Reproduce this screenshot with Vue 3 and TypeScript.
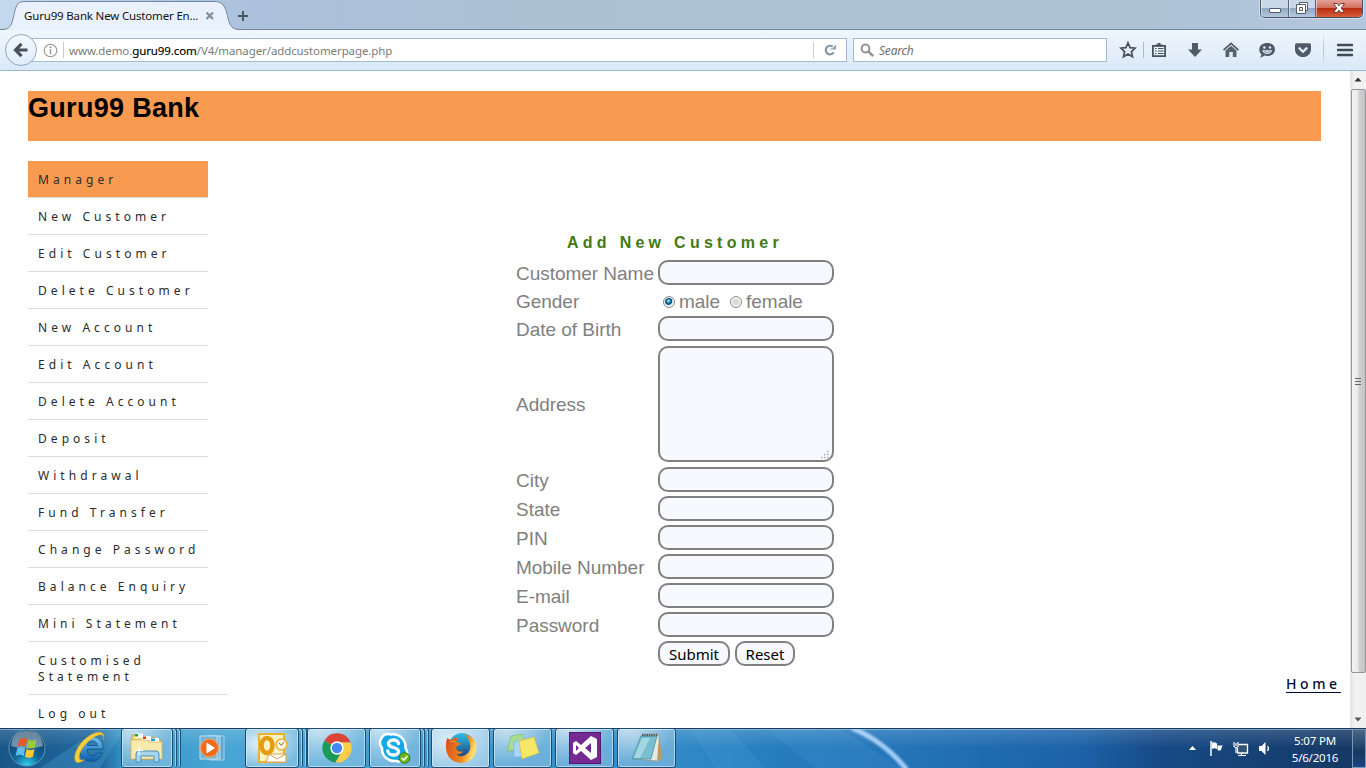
<script setup lang="ts">
interface MenuItem { label: string; kind?: string }
interface Field { label: string; kind: 'text' | 'gender' | 'area' }

const menu: MenuItem[] = [
  { label: 'Manager', kind: 'current' },
  { label: 'New Customer' },
  { label: 'Edit Customer' },
  { label: 'Delete Customer' },
  { label: 'New Account' },
  { label: 'Edit Account' },
  { label: 'Delete Account' },
  { label: 'Deposit' },
  { label: 'Withdrawal' },
  { label: 'Fund Transfer' },
  { label: 'Change Password' },
  { label: 'Balance Enquiry' },
  { label: 'Mini Statement' },
  { label: 'Customised Statement', kind: 'wrapped' },
  { label: 'Log out' },
]

const fields: Field[] = [
  { label: 'Customer Name', kind: 'text' },
  { label: 'Gender', kind: 'gender' },
  { label: 'Date of Birth', kind: 'text' },
  { label: 'Address', kind: 'area' },
  { label: 'City', kind: 'text' },
  { label: 'State', kind: 'text' },
  { label: 'PIN', kind: 'text' },
  { label: 'Mobile Number', kind: 'text' },
  { label: 'E-mail', kind: 'text' },
  { label: 'Password', kind: 'text' },
]
</script>

<template>
  <div class="screen">
    <header class="tabstrip">
      <div class="tab">
        <svg class="tab-shape" width="244" height="30" viewBox="0 0 244 30">
          <path d="M0 30V29.500H3C12 29.500 12.500 21 14.500 12C16.500 4 18.500 1.500 25 1.500H214C221 1.500 224 4 226.500 12C229 21 229 29.500 239 29.500H244V30Z" fill="#e9f2fc" />
          <path d="M0 29.500H3C12 29.500 12.500 21 14.500 12C16.500 4 18.500 1.500 25 1.500H214C221 1.500 224 4 226.500 12C229 21 229 29.500 239 29.500H244" fill="none" stroke="#7289a3" />
        </svg>
        <span class="tab-title">Guru99 Bank New Customer En...</span>
        <svg class="tab-close" width="10" height="10" viewBox="0 0 10 10"><path d="M1.500 1.500L8 8M8 1.500L1.500 8" stroke="#7e8d9d" stroke-width="2.200" /></svg>
      </div>
      <svg class="plus" width="12" height="12" viewBox="0 0 12 12"><path d="M6 1V11M1 6H11" stroke="#4d5864" stroke-width="2" /></svg>
      <div class="winbtns">
        <span class="wb wb-min"><svg width="14" height="8" viewBox="0 0 14 8"><rect x="1.500" y="2.500" width="11" height="4" rx=".5" fill="#fff" stroke="#555b6b" /></svg></span>
        <span class="wb wb-max"><svg width="14" height="14" viewBox="0 0 14 14"><path d="M4.500 1.500H12.500V9.500H4.500Z" fill="#fff" stroke="#555b6b" /><path d="M1.500 3.500H10.500V12.500H1.500ZM4.500 6.500V9.500H7.500V6.500Z" fill="#fff" fill-rule="evenodd" stroke="#555b6b" /></svg></span>
        <span class="wb wb-close"><svg width="14" height="12" viewBox="0 0 14 12"><path d="M1.500 1.500H5L7 3.800L9 1.500H12.500L9.200 6L12.500 10.500H9L7 8.200L5 10.500H1.500L4.800 6Z" fill="#fff" stroke="#6a3c40" /></svg></span>
      </div>
    </header>

    <div class="toolbar">
      <div class="back">
        <svg width="16" height="16" viewBox="0 0 16 16"><path d="M8.500 1.800L2.500 8L8.500 14.200M3 8H14.500" fill="none" stroke="#46525f" stroke-width="3.200" /></svg>
      </div>
      <div class="urlbar">
        <svg class="info" width="15" height="15" viewBox="0 0 15 15"><circle cx="7.500" cy="7.500" r="6.300" fill="none" stroke="#949494" stroke-width="1.100" /><path d="M7.500 6.200V11.200" stroke="#949494" stroke-width="1.400" /><circle cx="7.500" cy="4.200" r=".95" fill="#949494" /></svg>
        <span class="sep"></span>
        <span class="url">www.demo.<b>guru99.com</b>/V4/manager/addcustomerpage.php</span>
        <span class="sep sep-right"></span>
        <svg class="reload" width="14" height="14" viewBox="0 0 14 14"><path d="M10.700 9.400A4.300 4.300 0 1 1 9.800 3.700" fill="none" stroke="#8697a9" stroke-width="2.200" /><path d="M12.800 1.200V6.600H7.200V5.600H9.700Z" fill="#8697a9" /></svg>
      </div>
      <div class="search">
        <svg width="15" height="15" viewBox="0 0 15 15"><circle cx="5.500" cy="5.500" r="3.900" fill="none" stroke="#929292" stroke-width="2" /><path d="M8.300 8.300L13.200 13.200" stroke="#929292" stroke-width="2.600" /></svg>
        <span>Search</span>
      </div>
      <div class="tools">
        <svg width="18" height="18" viewBox="0 0 18 18"><path d="M9 1.800L11.100 6.600L16.200 7.100L12.400 10.600L13.500 15.800L9 13.100L4.500 15.800L5.600 10.600L1.800 7.100L6.900 6.600Z" fill="none" stroke="#47535f" stroke-width="1.700" /></svg>
        <span class="tool-sep"></span>
        <svg width="16" height="16" viewBox="0 0 16 16"><path d="M1.900 3.900H14.100V14.100H1.900Z" fill="none" stroke="#47535f" stroke-width="1.800" /><path d="M4.500 4.500V2.500H6.500V1H9.500V2.500H11.500V4.500Z" fill="#47535f" /><path d="M4 6.500H5.500M7 6.500H12.500M4 9H5.500M7 9H12.500M4 11.500H5.500M7 11.500H12.500" stroke="#47535f" stroke-width="1.200" /></svg>
        <svg width="16" height="16" viewBox="0 0 16 16"><path d="M5 1H11V7.500H15L8 15L1 7.500H5Z" fill="#4f5c68" /></svg>
        <svg width="18" height="16" viewBox="0 0 18 16"><path d="M1.500 8.200L9 1.400L16.500 8.200" fill="none" stroke="#4f5c68" stroke-width="1.700" /><path d="M3.500 8.500L9 3.800L14.500 8.500V15H10.800V10H7.200V15H3.500Z" fill="#56636f" /></svg>
        <svg width="18" height="17" viewBox="0 0 18 17"><path d="M9.200 1C13.800 1 17 3.600 17 7.400C17 11.200 13.800 14 9.200 14C8 14 7 13.900 6.200 13.600C5 15 3.500 15.500 2 15.300C3 14.400 3.400 13.300 3.300 12.200C2 11 1.300 9.400 1.300 7.400C1.300 3.600 4.600 1 9.200 1Z" fill="#4f5c68" /><circle cx="6.300" cy="5.500" r="1.200" fill="#e3eefa" /><circle cx="12" cy="5.500" r="1.200" fill="#e3eefa" /><path d="M4.300 8.200H14C13.500 10.800 11.600 12 9.200 12S4.900 10.800 4.300 8.200Z" fill="#e3eefa" /><path d="M6 9.500Q9.200 11.500 12.300 9.500" fill="none" stroke="#4f5c68" stroke-width=".7" /></svg>
        <svg width="18" height="16" viewBox="0 0 18 16"><path d="M2.500 1.300H15.500Q17 1.300 17 3V7.200C17 11.700 13.600 15 9 15S1 11.700 1 7.200V3Q1 1.300 2.500 1.300Z" fill="#4f5c68" /><path d="M4.800 5.600L9 9.700L13.200 5.600" fill="none" stroke="#e3eefa" stroke-width="2.200" /></svg>
        <span class="tool-sep tall"></span>
        <svg width="16" height="14" viewBox="0 0 16 14"><path d="M1 2H15M1 7H15M1 12H15" stroke="#404c58" stroke-width="2.700" stroke-linecap="round" /></svg>
      </div>
    </div>

    <div class="viewport">
      <main class="page">
        <h1 class="banner">Guru99 Bank</h1>
        <div class="columns">
          <ul class="menu">
            <li v-for="m in menu" :key="m.label" :class="m.kind"><span>{{ m.label }}</span></li>
          </ul>
          <form class="form" @submit.prevent>
            <h2>Add New Customer</h2>
            <div v-for="f in fields" :key="f.label" class="row" :class="f.kind">
              <label>{{ f.label }}</label>
              <div v-if="f.kind === 'gender'" class="choices">
                <i class="radio on"></i><span>male</span>
                <i class="radio second"></i><span>female</span>
              </div>
              <div v-else-if="f.kind === 'area'" class="box">
                <svg class="grip" width="10" height="10" viewBox="0 0 10 10"><path d="M7 1.500H8.500M4 4.500H5.500M7 4.500H8.500M1 7.500H2.500M4 7.500H5.500M7 7.500H8.500" stroke="#a9a9a9" stroke-width="1.300" /></svg>
              </div>
              <div v-else class="box"></div>
            </div>
            <div class="buttons"><button class="submit">Submit</button><button class="reset">Reset</button></div>
          </form>
          <a class="home">Home</a>
        </div>
      </main>
      <div class="scroll">
        <svg class="up" width="8" height="5" viewBox="0 0 8 5"><path d="M4 .5L7.500 4.500H.5Z" fill="#333" /></svg>
        <div class="thumb"><svg width="8" height="9" viewBox="0 0 8 9"><path d="M1 1.500H7M1 4.500H7M1 7.500H7" stroke="#666" /></svg></div>
        <svg class="down" width="8" height="5" viewBox="0 0 8 5"><path d="M4 4.500L7.500 .5H.5Z" fill="#555" /></svg>
      </div>
    </div>

    <footer class="taskbar">
      <svg class="aurora" width="1366" height="40" viewBox="0 0 1366 40">
        <defs>
          <linearGradient id="bar"><stop offset="0" stop-color="#1a5789" /><stop offset=".075" stop-color="#20689f" /><stop offset=".09" stop-color="#3593c5" /><stop offset=".16" stop-color="#48a5d4" /><stop offset=".33" stop-color="#3d97cc" /><stop offset=".5" stop-color="#3089c5" /><stop offset=".58" stop-color="#257bbd" /><stop offset=".66" stop-color="#2474b8" /><stop offset=".79" stop-color="#1c62a8" /><stop offset=".85" stop-color="#174a85" /><stop offset="1" stop-color="#153763" /></linearGradient>
          <linearGradient id="shine" x2="0" y2="1"><stop offset="0" stop-color="#fff" stop-opacity=".16" /><stop offset=".5" stop-color="#fff" stop-opacity="0" /></linearGradient>
          <filter id="soft" x="-20%" y="-20%" width="140%" height="140%"><feGaussianBlur stdDeviation="1.300" /></filter>
        </defs>
        <rect width="1366" height="40" fill="url(#bar)" />
        <path d="M40 40L100 0H125L100 40Z" fill="#57b2df" opacity=".25" />
        <path d="M690 0H730L765 40H715ZM765 0H840L900 40H815Z" fill="#60aee8" opacity=".13" />
        <path d="M852 0Q885 14 907 42" fill="none" stroke="#a1cdf7" stroke-width="5" filter="url(#soft)" />
        <rect width="1366" height="40" fill="url(#shine)" />
        <path d="M0 .5H1366" stroke="#1d3a5c" /><path d="M0 1.500H1366" stroke="#9ecbea" stroke-opacity=".65" />
      </svg>

      <div class="slot orb">
        <svg width="40" height="40" viewBox="0 0 40 40">
          <defs><radialGradient id="orbg" cx=".5" cy="1" r=".9"><stop offset="0" stop-color="#35d9f5" /><stop offset=".4" stop-color="#126a9f" /><stop offset="1" stop-color="#12395c" /></radialGradient></defs>
          <circle cx="20" cy="20" r="18" fill="url(#orbg)" stroke="#5a97b8" />
          <path d="M4 18Q5 3 20 3T36 18Q20 23 4 18Z" fill="#c7d7e3" opacity=".5" />
          <path d="M12.500 11.500Q16 8.500 20 11L18.500 19Q14.500 16.500 10.500 19Z" fill="#e7572b" />
          <path d="M21.300 11.700Q25 14 29.500 11.500L27.800 19.500Q23.500 21.600 19.700 19.500Z" fill="#9ecb3a" />
          <path d="M10.300 20.300Q14 18 18.200 20.300L16.800 28Q12.500 25.500 8.700 28Z" fill="#5fbdf0" />
          <path d="M19.500 20.900Q23.500 23.200 27.500 20.900L26 28.500Q22 31 18 28.500Z" fill="#fbc930" />
        </svg>
      </div>

      <div class="slot ie">
        <svg width="34" height="36" viewBox="0 0 34 36">
          <defs><linearGradient id="ieg" x2="0" y2="1"><stop offset="0" stop-color="#6fc7f3" /><stop offset="1" stop-color="#0d5aa7" /></linearGradient></defs>
          <path d="M31 19H15C15 26.500 22.500 27.500 25 23H30.500C28 29 24 31.500 19.500 31.500C12 31.500 7.500 26 7.500 19S12 6.500 19.500 6.500S32 12 31 19ZM15.300 15.500H25.300C25 9.500 15.700 9.500 15.300 15.500Z" fill="url(#ieg)" stroke="#104f89" stroke-width=".8" />
          <path d="M31 10C36-2 19 1 9 13C2 22 1 31 5 32.500C7 33.200 10 31.500 13 29.500C5 33 6 24 12 16C19 7 34-1 31 10Z" fill="#f7cd3b" stroke="#cf9714" stroke-width=".5" />
        </svg>
      </div>

      <div class="slot btn explorer">
        <svg width="34" height="32" viewBox="0 0 34 32">
          <path d="M2 3H10L12 5H24L25 8H31V27H2Z" fill="#f2d677" stroke="#c09a3c" stroke-width=".8" />
          <path d="M5 1.500H13V6H5Z" fill="#fff" /><path d="M5 2H8V4.500H5Z" fill="#17a84a" /><path d="M12 4H21V8H12Z" fill="#fff" /><path d="M13 4.500H16V7H13Z" fill="#d7362b" /><path d="M20 6H29V10H20Z" fill="#fff" /><path d="M21 6.500H25V9H21Z" fill="#1e9ae0" />
          <path d="M1 8H17L19 10H32V27H1Z" fill="#f8e9ac" stroke="#d5b661" stroke-width=".8" />
          <path d="M6 30V22Q6 19 9 19H26Q29 19 29 22V30H24V24H11V30Z" fill="#a4d5ec" stroke="#4c91bd" />
          <path d="M9 14V23M5 18.500H13" stroke="#fff" stroke-width="1.200" />
        </svg>
      </div>
      <i class="stack"></i><i class="stack second"></i>

      <div class="slot wmp">
        <svg width="30" height="28" viewBox="0 0 30 28">
          <path d="M12 2H26V26H12Z" fill="#60a6d0" stroke="#a2d3eb" /><path d="M8 2H22V25H8Z" fill="#7ebadb" stroke="#b9e0f1" /><path d="M2 2H19V25H2Z" fill="#72b3d8" stroke="#b5deef" />
          <circle cx="11.500" cy="14" r="9" fill="#ed6b1c" stroke="#ffa55b" /><path d="M8.500 8.500L17 14L8.500 19.500Z" fill="#fff" />
        </svg>
      </div>

      <div class="slot btn outlook">
        <svg width="34" height="34" viewBox="0 0 34 34">
          <path d="M4 3H29V31H4Z" fill="#fff3c6" stroke="#eeb12d" stroke-width="2" /><ellipse cx="12" cy="14.500" rx="5.500" ry="7.500" fill="none" stroke="#e59c0c" stroke-width="4.500" />
          <path d="M14 23H31V31H11Z" fill="#fff" stroke="#dba047" /><path d="M14 23L22 28L31 23" fill="none" stroke="#dba047" />
          <circle cx="26.500" cy="13.500" r="5.500" fill="#fff8dd" stroke="#e8b03a" stroke-width="1.500" /><path d="M24 12L26.500 14.500L29 11" fill="none" stroke="#a06b1c" />
        </svg>
      </div>
      <i class="stack"></i><i class="stack second"></i>

      <div class="slot btn chrome">
        <svg width="32" height="32" viewBox="0 0 32 32">
          <path d="M16 16L3.300 8.700A14.500 14.500 0 0 1 29.500 10.500H16Z" fill="#dc4437" />
          <path d="M16 16L3.300 8.700A14.500 14.500 0 0 0 14.500 30.500L21.500 19Z" fill="#1a9c58" />
          <path d="M16 10.500H29.500A14.500 14.500 0 0 1 14.500 30.500L21 19Z" fill="#fdcc4a" />
          <circle cx="16" cy="16" r="6.700" fill="#fff" /><circle cx="16" cy="16" r="5.200" fill="#4387f5" />
        </svg>
      </div>

      <div class="slot btn skype">
        <svg width="34" height="34" viewBox="0 0 34 34">
          <path d="M4 17A8.500 8.500 0 0 1 13 3.500A12.500 12.500 0 0 1 27.500 17A8.500 8.500 0 0 1 18 30A12.500 12.500 0 0 1 4 17Z" fill="#12a9e8" stroke="#fff" stroke-width="2.500" />
          <path d="M20.500 12.500C20 7.500 10 8 10.500 13C11 17.500 20.500 15.500 20.500 20.500C20.500 25.500 10 25 9.800 20" fill="none" stroke="#fff" stroke-width="3.300" stroke-linecap="round" />
          <circle cx="26.500" cy="27" r="5.300" fill="#6bb51d" stroke="#397a0e" /><path d="M23.700 27L25.800 29.100L29.500 25" fill="none" stroke="#fff" stroke-width="1.500" />
        </svg>
      </div>
      <i class="stack"></i><i class="stack second"></i>

      <div class="slot btn firefox">
        <svg width="34" height="34" viewBox="0 0 34 34">
          <defs><linearGradient id="ff" x2="1" y2=".3"><stop offset="0" stop-color="#d64b1b" /><stop offset=".7" stop-color="#ee861f" /><stop offset="1" stop-color="#ffe16b" /></linearGradient><linearGradient id="globe" x2="0" y2="1"><stop offset="0" stop-color="#32bfea" /><stop offset="1" stop-color="#173b79" /></linearGradient></defs>
          <circle cx="18" cy="15" r="13" fill="url(#globe)" />
          <path d="M3 7L7 9Q10 6 14 7L12 11Q17 11 17 13L12 16Q13 22 19 20Q17 24 12 23Q18 28 24 22Q29 16 24 7Q23 5 20 3Q35 6 32 20C30 28 24 32 17 32C6 32-1 22 3 7Z" fill="url(#ff)" />
          <path d="M6 11L9 10L13 12" fill="none" stroke="#f3a143" />
        </svg>
      </div>

      <div class="slot btn notes">
        <svg width="36" height="30" viewBox="0 0 36 30">
          <path d="M6 3L18 1L20 16L2 18Z" fill="#a9dc91" stroke="#77b966" stroke-width=".6" /><path d="M9 8H23V24H9Z" fill="#a6d8f5" stroke="#71b4df" stroke-width=".6" /><path d="M14 8L29 4L34 20L17 26Z" fill="#f6e768" stroke="#cdbb3d" stroke-width=".6" />
        </svg>
      </div>

      <div class="slot btn studio">
        <svg width="32" height="32" viewBox="0 0 32 32">
          <rect width="32" height="32" fill="#742a92" /><rect x=".5" y=".5" width="31" height="31" fill="none" stroke="#531870" />
          <path d="M22 4L28 7V25L22 28L12 19L7 23L4 21V11L7 9L12 13ZM22 11L16 16L22 21ZM7 13V19L10 16Z" fill="#fff" fill-rule="evenodd" />
        </svg>
      </div>

      <div class="slot btn notepad">
        <svg width="34" height="32" viewBox="0 0 34 32">
          <path d="M12 3H29L31 27L27 29L4 27Z" fill="#e8e8df" stroke="#918b77" stroke-width=".7" /><path d="M29 4L32 27L27 29Z" fill="#b99b63" />
          <path d="M11 4H27L21 27H2Z" fill="#78bfd1" stroke="#3d899e" stroke-width=".7" /><path d="M12 6H20L10 26H4Z" fill="#c1e6ec" opacity=".6" /><path d="M12 3H28" stroke="#4e5558" stroke-width="2.500" stroke-dasharray="1.300 1" />
        </svg>
      </div>

      <div class="tray">
        <svg class="chevron" width="9" height="6" viewBox="0 0 9 6"><path d="M4.500 1L8 5H1Z" fill="#fff" /></svg>
        <svg class="flag" width="15" height="17" viewBox="0 0 15 17"><path d="M2 1V16" stroke="#fff" stroke-width="1.500" /><path d="M3 2.500Q5.500 1.500 8 3.500V9Q5.500 7.500 3 9ZM8.500 5Q11 6.500 13.500 5L12 10Q10 11 8.500 10Z" fill="#fff" /></svg>
        <svg class="network" width="16" height="16" viewBox="0 0 16 16"><path d="M5.500 3.500H14.500V12H4.500V7" fill="#315474" stroke="#fff" stroke-width="1.300" /><path d="M1 1V5Q1 6.500 3 6.500T5 5V1M3 2V5M3 6.500V12M8.500 12V14.500M5 14.500H13" fill="none" stroke="#fff" stroke-width="1.200" /></svg>
        <svg class="volume" width="14" height="15" viewBox="0 0 14 15"><path d="M1 5H3.500L7.500 1V14L3.500 10H1Z" fill="#fff" /><path d="M9.500 5Q11.500 7.500 9.500 10" fill="none" stroke="#fff" stroke-width="1.200" /></svg>
        <div class="clock"><span>5:07 PM</span><span>5/6/2016</span></div>
        <i class="peek"></i>
      </div>
    </footer>
  </div>
</template>

<style>
html, body { margin: 0; overflow: hidden; background: #fff; }
</style>

<style scoped>
* { box-sizing: border-box; }
svg { display: block; flex: none; }
.screen { width: 1366px; height: 768px; display: flex; flex-direction: column; overflow: hidden; background: #fff; font-family: "Noto Sans", sans-serif; }

.tabstrip { height: 30px; flex: none; display: flex; align-items: flex-start; background: linear-gradient(90deg, #c4d9ee 0, #abc0da 260px, #acc0d4 520px, #aec2d6 1150px, #b3c8df 1366px); box-shadow: inset 0 -1px #7289a3; }
.tab { position: relative; width: 237px; height: 30px; display: flex; align-items: center; padding-left: 24px; }
.tab-shape { position: absolute; left: 0; top: 0; }
.tab-title { position: relative; width: 180px; font-size: 11.5px; letter-spacing: -.17px; white-space: nowrap; color: #111; line-height: 16px; padding-top: 2px; }
.tab-close { position: relative; margin-left: 1px; margin-top: 2px; }
.plus { margin-top: 10px; }
.winbtns { margin-left: auto; margin-right: 3px; height: 18px; width: 103px; display: flex; border: 1px solid #45536a; border-top: 0; border-radius: 0 0 5px 5px; overflow: hidden; box-shadow: 0 0 1px 1px rgba(255,255,255,.45); }
.wb { display: flex; align-items: center; justify-content: center; background: linear-gradient(#cad7e7 0 45%, #92a8c3 50%, #b5c8dc); border-right: 1px solid #56667d; box-shadow: inset 1px 0 rgba(255,255,255,.5); }
.wb-min { width: 28px; padding-top: 2px; }
.wb-max { width: 27px; padding-bottom: 1px; }
.wb-close { flex: 1; border-right: 0; background: linear-gradient(#e5a196 0, #d3705d 45%, #b92c12 50%, #d75d38); padding-bottom: 1px; }

.toolbar { height: 41px; flex: none; display: flex; align-items: center; background: linear-gradient(#eff6fd, #dae9f8); border-bottom: 1px solid #a2b7ce; padding-left: 5px; }
.back { position: relative; z-index: 1; width: 32px; height: 32px; flex: none; border: 1px solid #91a8c3; border-radius: 50%; background: linear-gradient(#f3f8fe, #e1edfa); display: flex; align-items: center; justify-content: center; }
.urlbar { margin-left: -6px; width: 816px; height: 24px; background: #fff; border: 1px solid #a5bad2; display: flex; align-items: center; padding-left: 11px; }
.sep { width: 1px; height: 16px; background: #ccc; margin-left: 5px; }
.url { margin-left: 5px; width: 744px; font-size: 11.5px; letter-spacing: -.1px; line-height: 16px; padding-top: 1px; color: #7b7b7b; white-space: nowrap; }
.url b { font-weight: 400; color: #000; -webkit-text-stroke: .15px #000; }
.sep-right { margin-left: 0; }
.reload { margin-left: 9px; }
.search { margin-left: 6px; width: 254px; height: 24px; background: #fff; border: 1px solid #a5bad2; display: flex; align-items: center; padding-left: 6px; font-size: 12px; font-style: italic; color: #707070; }
.search span { margin-left: 4px; letter-spacing: -.2px; }
.tools { display: flex; align-items: center; margin-left: 12px; height: 40px; }
.tool-sep { width: 1px; height: 16px; background: #a9b9ca; margin: 0 7px 0 6px; }
.tools svg:nth-of-type(3) { margin-left: 20px; }
.tools svg:nth-of-type(4) { margin-left: 19px; }
.tools svg:nth-of-type(5) { margin-left: 18px; }
.tools svg:nth-of-type(6) { margin-left: 18px; }
.tool-sep.tall { height: 38px; margin: 0 13px 0 11px; background: linear-gradient(transparent, #b1c1d1, transparent); }

.viewport { height: 657px; flex: none; display: flex; overflow: hidden; }
.page { width: 1350px; padding: 20px 0 0 28px; overflow: hidden; }
.banner { margin: 0; width: 1293px; height: 50px; background: #f89b51; font: bold 27px/34px "Liberation Sans", Arial, sans-serif; letter-spacing: .3px; color: #000; }
.columns { display: flex; align-items: flex-start; margin-top: 20px; }
.menu { list-style: none; margin: 0; padding: 0; width: 200px; }
.menu li { width: 180px; height: 37px; border-bottom: 1px solid #dcdcdc; padding: 11px 0 0 10px; font-size: 12px; line-height: 16px; letter-spacing: 4.05px; color: #2b2b2b; white-space: nowrap; }
.menu li.current { background: #f89b51; }
.menu li.wrapped { width: 200px; height: 53px; white-space: normal; padding-right: 50px; }
.form { margin: 69px 0 0 288px; width: 318px; font: 19px/24px "Liberation Sans", Arial, sans-serif; letter-spacing: -.03px; color: #808080; }
.form h2 { margin: 0; height: 30px; padding-left: 51px; font: bold 16px/26px "Liberation Sans", Arial, sans-serif; letter-spacing: 4.27px; color: #447a14; white-space: nowrap; }
.row { height: 29px; display: flex; }
.row label { width: 142px; height: 25px; line-height: 27px; flex: none; white-space: nowrap; }
.row:nth-of-type(3) { height: 30px; }
.box { position: relative; width: 176px; height: 25px; border: 2px solid #808080; border-radius: 10px; background: #f8f8ff; }
.row.gender { height: 27px; }
.row.gender label { line-height: 25px; }
.row.area { height: 121px; }
.row.area label { height: 116px; line-height: 118px; }
.area .box { height: 116px; }
.grip { position: absolute; right: 2px; bottom: 0; }
.choices { display: flex; align-items: center; height: 25px; padding-left: 5px; }
.choices span { margin-left: 4px; line-height: 25px; }
.radio { width: 12px; height: 12px; border: 1px solid #8a8a8a; border-radius: 50%; background: radial-gradient(circle, #d9d9d9 0 2px, #f2f2f2 5px); box-shadow: inset 0 0 0 1px #fff; }
.radio.on { background: radial-gradient(circle at 45% 40%, #75d2ef 0 1px, #125a86 2.2px 3.5px, #dcebf3 4.2px); }
.radio.second { margin-left: 10px; }
.buttons { display: flex; gap: 5px; padding-left: 142px; }
.buttons button { height: 25px; padding: 0; border: 2px solid #808080; border-radius: 10px; background: #f8f8ff; font: 15px/20px "Noto Sans", sans-serif; color: #000; }
.submit { width: 72px; }
.reset { width: 60px; }
.home { margin: 515px 0 0 452px; font-size: 14px; font-weight: 500; line-height: 16px; letter-spacing: 3.6px; color: #000b33; border-bottom: 1px solid #000b33; white-space: nowrap; }

.scroll { width: 16px; background: linear-gradient(90deg, #e3e3e3, #f2f2f2 30%, #f0f0f0); display: flex; flex-direction: column; align-items: center; }
.up { margin-top: 6px; }
.thumb { margin-top: 7px; width: 15px; height: 584px; border: 1px solid #979797; border-radius: 2px; background: linear-gradient(90deg, #f5f5f5, #e9e9eb 45%, #d0d0d2 55%, #c3c3c5); display: flex; align-items: center; justify-content: center; }
.down { margin-top: 44px; }

.taskbar { position: relative; height: 40px; flex: none; display: flex; }
.aurora { position: absolute; left: 0; top: 0; }
.slot { position: relative; height: 40px; flex: none; display: flex; align-items: center; justify-content: center; }
.orb { width: 40px; margin-left: 7px; }
.ie { width: 34px; margin-left: 25px; }
.btn { width: 59px; border: 1px solid #1c4a70; border-radius: 3px; background: radial-gradient(ellipse at 20% 0, rgba(255,255,255,.62), rgba(190,224,245,.25) 65%), rgba(185,220,245,.2); box-shadow: inset 0 0 0 1px rgba(222,241,252,.6); }
.explorer { margin-left: 15px; width: 52px; }
.stack { position: relative; width: 4px; height: 40px; flex: none; border-right: 1px solid #1f527b; border-top: 1px solid #1f527b; border-radius: 0 3px 3px 0; box-shadow: inset -1px 1px rgba(205,235,250,.6); }
.wmp { width: 30px; margin-left: 17px; margin-right: 17px; }
.outlook { width: 54px; background: radial-gradient(ellipse at 30% 40%, rgba(255,255,255,.85), rgba(200,229,246,.4) 75%); }
.chrome { width: 59px; }
.skype { width: 52px; margin-left: 3px; }
.firefox { margin-left: 2px; background: radial-gradient(ellipse at 30% 30%, rgba(255,255,255,.8), rgba(214,235,249,.6) 80%); }
.notes, .studio, .notepad { margin-left: 3px; }
.tray { position: relative; margin-left: auto; display: flex; align-items: center; height: 40px; }
.flag { margin-left: 12px; }
.network { margin-left: 9px; margin-top: 1px; }
.volume { margin-left: 9px; }
.clock { width: 58px; margin-left: 14px; display: flex; flex-direction: column; align-items: center; color: #fff; font-size: 11.5px; line-height: 17px; letter-spacing: -.2px; padding-top: 1px; }
.peek { width: 14px; height: 39px; margin-top: 1px; margin-left: 8px; border: 1px solid #7d98b4; background: linear-gradient(#4a6989, #173860 60%, #174783); }
</style>
